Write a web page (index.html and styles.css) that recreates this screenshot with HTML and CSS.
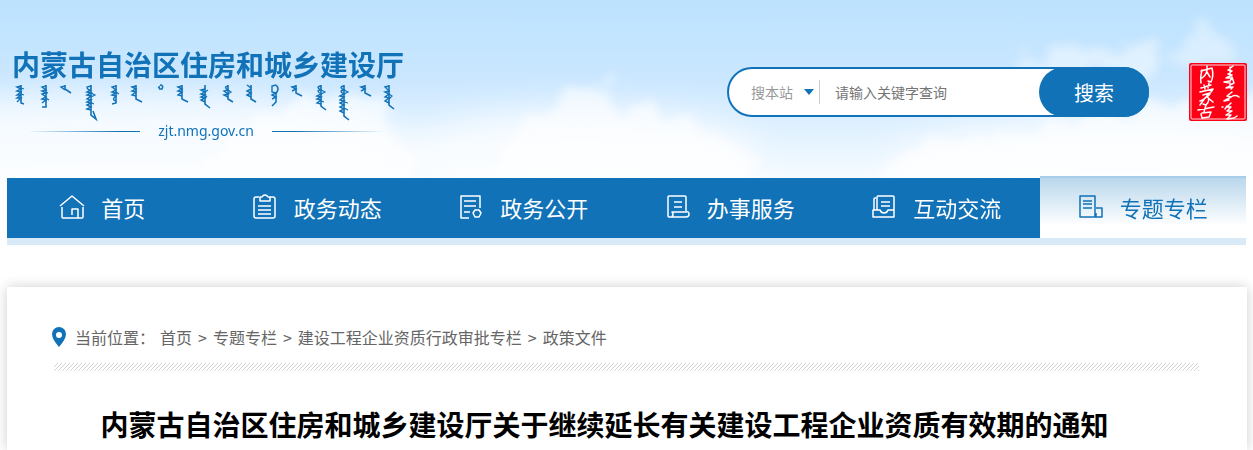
FILE: index.html
```
<!DOCTYPE html>
<html lang="zh-CN">
<head>
  <meta charset="UTF-8">
  <meta name="viewport" content="width=device-width, initial-scale=1.0">
  <title>内蒙古自治区住房和城乡建设厅关于继续延长有关建设工程企业资质有效期的通知</title>
  <link rel="stylesheet" href="styles.css">
</head>
<body>
  <!-- Header -->
  <header class="header">
    <svg class="sky" viewBox="0 0 1253 180" preserveAspectRatio="none" aria-hidden="true">
      <defs>
        <filter id="cloud" x="-10%" y="-30%" width="120%" height="160%">
          <feTurbulence type="fractalNoise" baseFrequency="0.035" numOctaves="5" seed="4" result="noise"/>
          <feDisplacementMap in="SourceGraphic" in2="noise" scale="50" xChannelSelector="R" yChannelSelector="G"/>
          <feGaussianBlur stdDeviation="5"/>
        </filter>
        <filter id="haze" x="-20%" y="-40%" width="140%" height="180%">
          <feGaussianBlur stdDeviation="16"/>
        </filter>
      </defs>
      <g fill="#fff" filter="url(#haze)" opacity="0.7">
        <ellipse cx="120" cy="150" rx="300" ry="54"/>
        <ellipse cx="580" cy="160" rx="180" ry="50"/>
        <ellipse cx="1120" cy="165" rx="230" ry="46"/>
      </g>
      <g fill="#fff" filter="url(#cloud)" opacity="0.6">
        <path d="M190 200L230 125L290 105L340 95L385 112L400 150L440 200Z"/>
        <path d="M480 200L515 125L545 116L570 90L600 84L618 114L645 108L665 116L700 118L730 150L800 200Z"/>
        <path d="M850 200L900 155L950 134L1010 136L1090 120L1160 104L1220 92L1280 85V200Z"/>
        <path d="M1000 82L1030 58L1050 42L1078 38L1090 50L1130 48L1150 34L1160 70L1060 86Z" opacity="0.75"/>
        <path d="M1160 62L1190 38L1202 16L1218 18L1235 60L1200 70Z" opacity="0.6"/>
      </g>
    </svg>

    <div class="logo">
      <a class="logo-name" href="#">内蒙古自治区住房和城乡建设厅</a>
      <svg class="logo-script" width="384" height="38" viewBox="0 0 384 38" fill="none" stroke="#1172b8" aria-hidden="true">
        <path stroke-width="1.6" d="M9 1v18l3 1M34 1v22h-4M53 1v4l6 4M79 1v30l5 4l-3-8M104 1v18l-4 1M124 1v14l6 3M148 1q4 0 2 4h-3M170 1v14l6 3M193 1v19l5 4M216 1v14l5 3M239 1v14l5 3M264 1q4 4 0 8v9l-4 4M284 1v8l6 3M309 1v21l5 4M332 1v31l5 4M353 1v8l6 3M377 1v20l5 4"/>
        <path stroke-width="1.4" d="M9 2l-4 1l4 2l-4 2l4 1l-4 3l4 0l-4 3l4 0l-4 4M34 2l-4 1l4 3l-4 1l4 2l-4 1l4 3l-4 2l4 1l-4 3M53 2l-4 1l4 3M79 2l-4 1q0 3 4 3l-4 2l4 1l-4 2l4 1l-4 3l4 1l-4 2l4 1l-4 2l4 2l-4 2l4 1M104 2l-4 1l4 3l-4 2l4 1l-4 2l4 1q-5 4 0 5M124 2l-4 1l4 2l-4 2l4 1l-4 3l4 1M148 2q-3 2 0 2M170 2l-4 1l4 2l-4 2l4 1l-4 3l4 1M193 5l-4 1l4 2l-4 2l4 1l-4 2l4 1l-4 2l4 2M216 2q-5 1 0 4l-4 1l4 3l-4 1l4 2M239 4l-4-3M239 5l-4 2l4 2l-4 2l4 2M264 1l-4 1v6l4 1l-4 2l4 2l-4 2M284 2l-4 1l4 2l-4 2M309 2q-6 1 0 4q-6 0 0 4l-4 2l4 1l-4 2l4 1l-4 3l4 1M332 2q-6 1 0 4q-6 1 0 4l-4 2l4 1l-4 3l4 1l-4 2l4 2l-4 2l4 2l-4 2l4 2M353 2l-4 1l4 2l-4 2M377 2l-4 1l4 4l-4 1l4 2l-4 3l4 1l-4 3l4 2"/>
        <path stroke-width="1.2" d="M9 4l3 1M9 10l3 1M34 8l2 1M34 14l3 2M79 9l4 2l-4 2M79 19l3 1M104 8l3 2M193 8l3-2M193 14l2-2M216 6l3 2l-3 2M309 6l4 2l-4 2M309 17l3 1M332 6l4 2l-4 2M332 18l4 1M332 24l4 2M377 10l3 2l-3 3"/>
      </svg>
      <div class="logo-url"><span>zjt.nmg.gov.cn</span></div>
    </div>

    <form class="search">
      <select class="search-scope" aria-label="搜索范围">
        <option>搜本站</option>
        <option>搜全网</option>
      </select>
      <input class="search-input" type="text" placeholder="请输入关键字查询" aria-label="关键字">
      <button class="search-button" type="button">搜索</button>
    </form>

    <svg class="seal" width="58" height="58" viewBox="0 0 58 58" role="img" aria-label="内蒙古">
      <rect width="58" height="58" rx="2" fill="#fe0016"/>
      <rect x="2" y="2" width="54" height="54" rx="1" fill="none" stroke="#fff" stroke-width="1" opacity="0.85"/>
      <g fill="none" stroke="#fff" stroke-width="1.5" stroke-linecap="round" stroke-linejoin="round">
        <path d="M13 7q-2 8-1 13M12 8l11-3q2 8-1 14l-3-1M18 3q1 8-5 12M18 9l3 5"/>
        <path d="M12 25l10-3M15 22l1 4M20 20l-1 5M11 29l13-3l-2 3M14 32l7-2M19 31q-2 5-8 7M18 33q4 4-1 9l-3-1M16 35l-5 7M21 31l-3 3l6 5"/>
        <path d="M9 47l16-3M17 42l-2 7M13 50l9-1l-2 5l-7 1l-1-4"/>
        <path d="M44 3l-5 4l4 1l-4 3l4 1l-6 3l6 0l-2 3l-6 1l6 1v3l-4 2l7-1l-2 2M41 4v8M43 14l2 6l-4 2"/>
        <path d="M43 29l-5 4l4 1l-7 4l5-1M42 34q4-3 8 0"/>
        <path d="M33 44h1M36 46l2-3M42 40l-4 4l4 0l-4 4l5 0l-6 4l5 0l-4 4l7-1l3-2"/>
      </g>
    </svg>
  </header>

  <!-- Navigation -->
  <nav class="nav">
    <a class="nav-item nav-home" href="#">
      <svg class="icon" viewBox="0 0 26 26"><path d="M1 12L13 2l12 10M3 13v10q0 1 1 1h19q1 0 1-1V13M13 21v-6h6v9"/></svg>
      首页
    </a>
    <a class="nav-item" href="#">
      <svg class="icon" viewBox="0 0 26 26"><path d="M7 3H4Q2 3 2 5v17q0 2 2 2h17q2 0 2-2V5q0-2-2-2h-3M8 7V3h2q1-2 3-2t3 2h2v4zM6 12h13M6 16h13M6 20h13"/></svg>
      政务动态
    </a>
    <a class="nav-item" href="#">
      <svg class="icon" viewBox="0 0 26 26"><path d="M22 14V2H3v22h8M6 7h12M6 12h12M6 18h6M17 16h4l2 3l-2 4h-4l-2-4z"/></svg>
      政务公开
    </a>
    <a class="nav-item" href="#">
      <svg class="icon" viewBox="0 0 26 26"><path d="M21 17V3q0-1-1-1H4Q3 2 3 3v19q0 1 1 1h17q3 0 3-3t-3-2H7q2 2 0 5M9 8h8M9 13h8"/></svg>
      办事服务
    </a>
    <a class="nav-item" href="#">
      <svg class="icon" viewBox="0 0 26 26"><path d="M5 4H4Q3 4 3 5v11M6 16V3q0-1 1-1h15q1 0 1 1v20H2v-7h7q1 3 4 3t4-3h6M10 8h9M10 12h9"/></svg>
      互动交流
    </a>
    <a class="nav-item active" href="#">
      <svg class="icon" viewBox="0 0 26 26"><path d="M17 23V2H2v21h22v-9h-6M5 7h9M5 10h9M5 14h9M18 23v-4"/></svg>
      专题专栏
    </a>
  </nav>

  <!-- Article -->
  <main class="article">
    <div class="breadcrumb">
      <svg class="pin" width="14" height="20" viewBox="0 0 14 20" aria-hidden="true">
        <path fill="#1172b8" fill-rule="evenodd" d="M7 0a7 7 0 0 1 7 7q0 5-7 13Q0 12 0 7a7 7 0 0 1 7-7zm0 5a3 3 0 1 0 0 6a3 3 0 0 0 0-6z"/>
      </svg>
      <span class="breadcrumb-label">当前位置：</span>
      <a href="#">首页</a>
      <span class="arrow">&gt;</span>
      <a href="#">专题专栏</a>
      <span class="arrow">&gt;</span>
      <a href="#">建设工程企业资质行政审批专栏</a>
      <span class="arrow">&gt;</span>
      <a href="#">政策文件</a>
    </div>
    <div class="stripes"></div>
    <h1 class="title">内蒙古自治区住房和城乡建设厅关于继续延长有关建设工程企业资质有效期的通知</h1>
  </main>
</body>
</html>
```
FILE: styles.css
```
* {
  box-sizing: border-box;
}

body {
  margin: 0;
  background-color: #ffffff;
  font-family: "Noto Sans CJK SC", sans-serif;
  overflow-x: hidden;
}

a {
  color: inherit;
  text-decoration: none;
}

/* Header */
.header {
  position: relative;
  display: flex;
  align-items: flex-start;
  height: 178px;
  padding: 44px 6px 0 12px;
  background: linear-gradient(#bce2fe, #cbe7ff 45%, #e2f2ff 75%, #f6fbff);
}

.sky {
  position: absolute;
  top: 0;
  left: 0;
  width: 100%;
  height: 100%;
}

.logo,
.search,
.seal {
  position: relative;
}

.logo {
  display: flex;
  flex-direction: column;
  color: #1172b8;
}

.logo-name {
  font-size: 28px;
  font-weight: 700;
  line-height: 40px;
}

.logo-url {
  display: flex;
  align-items: center;
  gap: 18px;
  width: 384px;
  padding: 0 12px 0 16px;
  font-family: "Noto Sans", sans-serif;
  font-size: 14px;
  line-height: 18px;
}

.logo-url::before,
.logo-url::after {
  content: "";
  flex: 1;
  height: 1px;
  background: linear-gradient(to right, transparent, #1172b8 80%);
}

.logo-url::after {
  background: linear-gradient(to left, transparent, #1172b8 80%);
}

.search {
  display: flex;
  align-items: center;
  width: 422px;
  height: 50px;
  margin: 23px 40px 0 auto;
  padding-left: 22px;
  border: 2px solid #1172b8;
  border-radius: 25px;
  background-color: #ffffff;
}

.search-scope {
  width: 69px;
  height: 24px;
  padding: 0;
  border: 0;
  border-right: 1px solid #cccccc;
  appearance: none;
  color: #999999;
  font-family: inherit;
  font-size: 14px;
  background: url("data:image/svg+xml,%3Csvg xmlns='http://www.w3.org/2000/svg' width='10' height='6'%3E%3Cpath d='M0 0h10L5 6z' fill='%231172b8'/%3E%3C/svg%3E") no-repeat right 5px center;
}

.search-input {
  flex: 1;
  min-width: 0;
  height: 40px;
  padding: 0 15px;
  border: 0;
  outline: none;
  background: transparent;
  font-family: inherit;
  font-size: 14px;
}

.search-input::placeholder {
  color: #757575;
}

.search-button {
  width: 110px;
  height: 50px;
  margin: -2px;
  border: 0;
  border-radius: 25px;
  background-color: #1172b8;
  color: #ffffff;
  font-family: inherit;
  font-size: 20px;
  cursor: pointer;
}

.seal {
  margin-top: 19px;
}

/* Navigation */
.nav {
  position: relative;
  display: grid;
  grid-template-columns: repeat(6, 1fr);
  grid-template-rows: 60px;
  align-items: end;
  margin: 0 7px;
  border-bottom: 7px solid #d8eaf8;
  background-color: #1172b8;
}

.nav-item {
  display: flex;
  align-items: center;
  justify-content: center;
  gap: 16px;
  height: 60px;
  padding-bottom: 2px;
  color: #ffffff;
  font-size: 22px;
  white-space: nowrap;
}

.nav-home {
  padding-right: 16px;
}

.nav-item.active {
  height: 62px;
  border-top: 2px solid #a8cde8;
  background: linear-gradient(#b9d7ec, #ffffff 80%);
  color: #1172b8;
}

.icon {
  width: 26px;
  height: 26px;
  fill: none;
  stroke: currentColor;
  stroke-width: 1.5;
  stroke-linejoin: round;
}

/* Article */
.article {
  margin: 42px 6px 0 7px;
  padding: 38px 48px 5px 47px;
  background-color: #ffffff;
  box-shadow: 0 0 12px rgba(0, 0, 0, 0.2);
}

.breadcrumb {
  display: flex;
  align-items: center;
  gap: 6px;
  height: 24px;
  margin-left: -2px;
  color: #666666;
  font-size: 16px;
}

.breadcrumb-label {
  margin-left: 3px;
  margin-right: -1px;
}

.arrow {
  font-size: 16px;
}

.pin {
  flex: none;
}

.stripes {
  height: 8px;
  margin-top: 14px;
  background: url("data:image/svg+xml,%3Csvg xmlns='http://www.w3.org/2000/svg' width='4' height='4'%3E%3Cpath d='M-1 1l2-2M0 4l4-4M3 5l2-2' stroke='%23d4d4d4'/%3E%3C/svg%3E");
}

.title {
  margin: 32px 0 0;
  padding-right: 44px;
  color: #000000;
  font-size: 28px;
  font-weight: 700;
  line-height: 42px;
  text-align: center;
}
```
